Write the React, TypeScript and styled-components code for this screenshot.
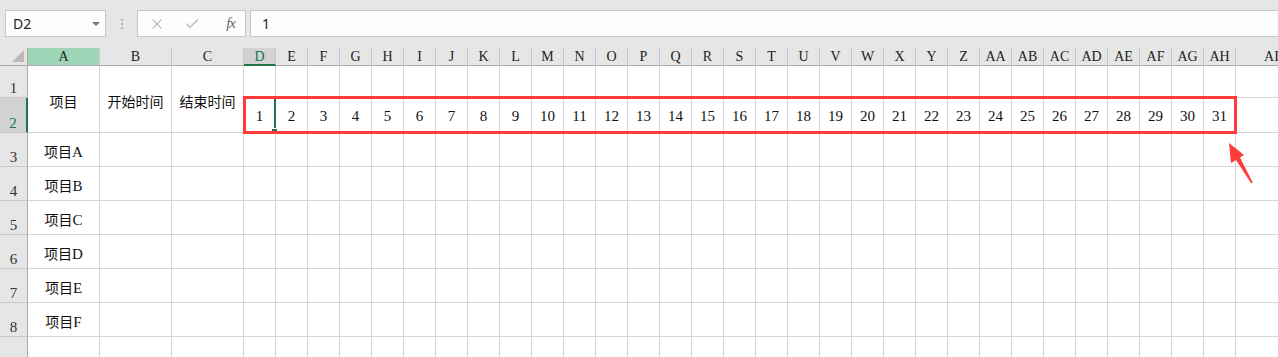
import React from "react";
import styled, { createGlobalStyle } from "styled-components";
import { X, Check } from "lucide-react";

const GlobalStyle = createGlobalStyle`
  html, body {
    margin: 0;
    padding: 0;
    overflow: hidden;
    background: #ffffff;
  }
  body {
    font-family: "Liberation Serif", "Noto Sans CJK SC", serif;
  }
`;

const Page = styled.div`
  width: 1278px;
  height: 357px;
  overflow: hidden;
  background: #ffffff;
`;

const Toolbar = styled.div`
  height: 48px;
  box-sizing: border-box;
  background: #e6e6e6;
  display: flex;
  align-items: flex-start;
  padding: 10px 0 0 5px;
  font-family: "Noto Sans", "Liberation Sans", sans-serif;
`;

const NameBox = styled.div`
  width: 101px;
  height: 27px;
  box-sizing: border-box;
  background: #fdfdfd;
  border: 1px solid #c6c6c6;
  display: flex;
  align-items: center;
  justify-content: space-between;
  padding: 0 5px 0 7px;
  font-size: 14px;
  color: #222;
`;

const Caret = styled.span`
  width: 0;
  height: 0;
  border-left: 4px solid transparent;
  border-right: 4px solid transparent;
  border-top: 4px solid #777;
`;

const Dots = styled.div`
  width: 31px;
  height: 27px;
  display: flex;
  flex-direction: column;
  align-items: center;
  justify-content: center;
  gap: 2px;

  span {
    width: 2px;
    height: 2px;
    background: #b5b5b5;
  }
`;

const FxButtons = styled.div`
  width: 109px;
  height: 27px;
  box-sizing: border-box;
  background: #fdfdfd;
  border: 1px solid #c6c6c6;
  display: flex;
  align-items: center;
  padding: 0 10px 0 11px;
  gap: 19px;
  color: #bdbdbd;
`;

const FxLabel = styled.span`
  margin-left: auto;
  font-family: "Liberation Serif", serif;
  font-style: italic;
  font-size: 15px;
  color: #666;
  letter-spacing: -1px;
`;

const FormulaInput = styled.div`
  flex: 1;
  height: 27px;
  margin-left: 4px;
  box-sizing: border-box;
  background: #fdfdfd;
  border: 1px solid #c6c6c6;
  border-right: none;
  display: flex;
  align-items: center;
  padding-left: 11px;
  font-size: 14px;
  color: #222;
`;

const Sheet = styled.div`
  position: relative;
  display: grid;
  grid-template-columns: 28px 72px 72px 72px repeat(31, 32px) 72px;
  grid-template-rows: 18px 32px 35px repeat(7, 34px);
  font-family: "Liberation Serif", "Noto Sans CJK SC", serif;
  font-size: 15px;
  color: #111;
`;

const Corner = styled.div`
  background: #e6e6e6;
  border-right: 1px solid #ababab;
  border-bottom: 1px solid #ababab;
  box-sizing: border-box;
  position: relative;

  &::after {
    content: "";
    position: absolute;
    right: 3px;
    bottom: 3px;
    width: 0;
    height: 0;
    border-left: 12px solid transparent;
    border-bottom: 12px solid #b9b9b9;
  }
`;

const ColHeader = styled.div<{ $active?: boolean; $picked?: boolean }>`
  box-sizing: border-box;
  display: flex;
  align-items: center;
  justify-content: center;
  font-size: 14px;
  background: ${(p) => (p.$picked ? "#9fd5b7" : p.$active ? "#d2d2d2" : "#e6e6e6")};
  color: ${(p) => (p.$active ? "#217346" : "#222")};
  border-right: 1px solid #c8c8c8;
  border-bottom: ${(p) => (p.$active ? "2px solid #217346" : "1px solid #ababab")};
  padding-top: 1px;
`;

const RowHeader = styled.div<{ $active?: boolean }>`
  box-sizing: border-box;
  display: flex;
  align-items: flex-end;
  justify-content: center;
  padding-bottom: 0;
  font-size: 15px;
  background: ${(p) => (p.$active ? "#d2d2d2" : "#e6e6e6")};
  color: ${(p) => (p.$active ? "#217346" : "#333")};
  border-right: ${(p) => (p.$active ? "2px solid #217346" : "1px solid #ababab")};
  border-bottom: 1px solid #c8c8c8;
`;

const Cell = styled.div<{ $span?: number; $selected?: boolean }>`
  box-sizing: border-box;
  grid-row: span ${(p) => p.$span ?? 1};
  display: flex;
  align-items: center;
  justify-content: center;
  white-space: nowrap;
  border-right: 1px solid #d4d4d4;
  border-bottom: 1px solid #d4d4d4;
  position: relative;
  padding-top: 3px;

  ${(p) =>
    p.$selected &&
    `
    &::before {
      content: "";
      position: absolute;
      left: -1px;
      top: -1px;
      right: -1px;
      bottom: -1px;
      border: 2px solid #217346;
    }
    &::after {
      content: "";
      position: absolute;
      right: -3px;
      bottom: -3px;
      width: 5px;
      height: 5px;
      background: #217346;
      border: 1px solid #fff;
    }
  `}
`;

const CjkText = styled.span`
  font-family: "Noto Sans CJK SC", sans-serif;
  font-size: 14px;
`;

const Highlight = styled.div`
  position: absolute;
  left: 243px;
  top: 48px;
  width: 994px;
  height: 38px;
  box-sizing: border-box;
  border: 3px solid #fe3a3a;
  pointer-events: none;
`;

const Arrow = styled.svg`
  position: absolute;
  left: 1225px;
  top: 92px;
`;

const letters = (i: number) => {
  const base = "ABCDEFGHIJKLMNOPQRSTUVWXYZ";
  return i < 26 ? base[i] : "A" + base[i - 26];
};

const columns = Array.from({ length: 35 }, (_, i) => letters(i));
const dayCols = columns.slice(3);
const projects = ["A", "B", "C", "D", "E", "F"];
const emptyRows = [3, 4, 5, 6, 7, 8, 9];

export default function App() {
  return (
    <Page>
      <GlobalStyle />
      <Toolbar>
        <NameBox>
          D2
          <Caret />
        </NameBox>
        <Dots>
          <span />
          <span />
          <span />
        </Dots>
        <FxButtons>
          <X size={16} strokeWidth={1.6} />
          <Check size={16} strokeWidth={2.2} />
          <FxLabel>fx</FxLabel>
        </FxButtons>
        <FormulaInput>1</FormulaInput>
      </Toolbar>

      <Sheet>
        <Corner />
        {columns.map((c) => (
          <ColHeader key={c} $picked={c === "A"} $active={c === "D"}>
            {c}
          </ColHeader>
        ))}

        <RowHeader>1</RowHeader>
        <Cell $span={2}>
          <CjkText>项目</CjkText>
        </Cell>
        <Cell $span={2}>
          <CjkText>开始时间</CjkText>
        </Cell>
        <Cell $span={2}>
          <CjkText>结束时间</CjkText>
        </Cell>
        {dayCols.map((c) => (
          <Cell key={"r1" + c} />
        ))}

        <RowHeader $active>2</RowHeader>
        {dayCols.map((c, i) => (
          <Cell key={"r2" + c} $selected={c === "D"}>
            {i < 31 ? i + 1 : ""}
          </Cell>
        ))}

        {emptyRows.map((r, idx) => (
          <React.Fragment key={"row" + r}>
            <RowHeader>{r < 9 ? r : ""}</RowHeader>
            <Cell>
              {projects[idx] && (
                <span>
                  <CjkText>项目</CjkText>
                  {projects[idx]}
                </span>
              )}
            </Cell>
            <Cell />
            <Cell />
            {dayCols.map((c) => (
              <Cell key={r + c} />
            ))}
          </React.Fragment>
        ))}

        <Highlight />
        <Arrow width="32" height="48" viewBox="0 0 32 48">
          <polygon
            points="4,3 19,15 15,17.5 27.7,42.6 26.3,43.4 11,20 6,23"
            fill="#fe3a3a"
          />
        </Arrow>
      </Sheet>
    </Page>
  );
}
